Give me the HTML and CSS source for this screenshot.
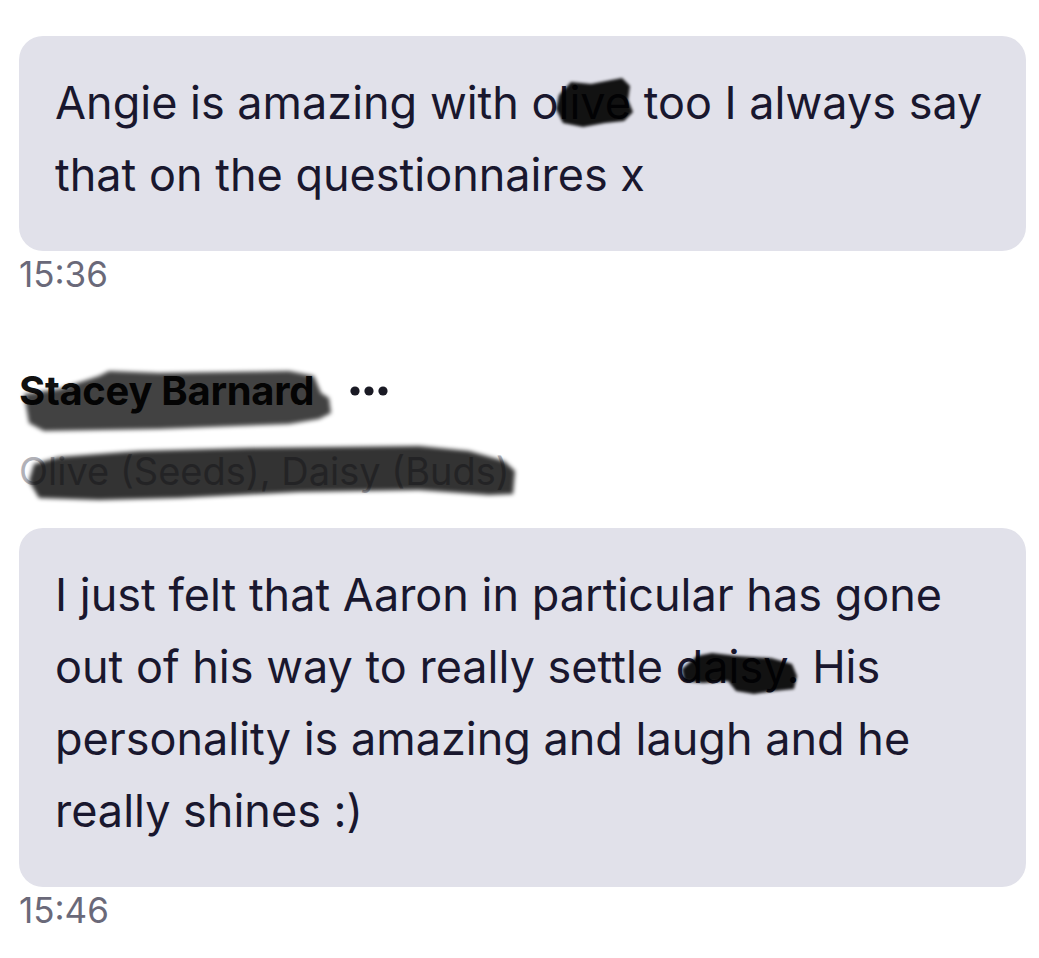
FILE: index.html
```html
<!DOCTYPE html>
<html lang="en">
<head>
<meta charset="utf-8">
<title>Messages</title>
<link rel="stylesheet" href="styles.css">
</head>
<body>
<main class="thread">
  <section class="msg">
    <div class="bubble">
      <p class="text">Angie is amazing with <span class="redact">olive<svg class="scribble" width="110" height="56" viewBox="0 0 110 56" aria-hidden="true"><defs><filter id="blur1" x="-20%" y="-20%" width="140%" height="140%"><feGaussianBlur stdDeviation="1.6"/></filter></defs><path filter="url(#blur1)" d="M27 20 L39 7 L59 9 L90 3 L98 11 L96 25 L101 37 L92 46 L73 48 L51 52 L31 48 L24 34 Z" fill="#000" fill-opacity="0.92"/></svg></span> too I always say that on the questionnaires x</p>
    </div>
    <div class="time">15:36</div>
  </section>

  <section class="sender">
    <div class="name-row">
      <span class="name redact">Stacey Barnard<svg class="scribble" width="320" height="66" viewBox="0 0 320 66" aria-hidden="true"><defs><filter id="blur2" x="-10%" y="-30%" width="120%" height="160%"><feGaussianBlur stdDeviation="2"/></filter></defs><path filter="url(#blur2)" d="M5 27 L40 22 L80 9 L90 4 L140 6 L270 4 L295 9 L302 26 L310 31 L312 46 L300 52 L270 57 L140 62 L25 64 L10 56 Z" fill="#000" fill-opacity="0.74"/></svg></span>
      <svg class="more" width="38" height="10" viewBox="0 0 38 10" aria-label="More"><circle cx="5" cy="5" r="4.6"/><circle cx="19" cy="5" r="4.6"/><circle cx="33" cy="5" r="4.6"/></svg>
    </div>
    <div class="groups"><span class="redact">Olive (Seeds), Daisy (Buds)<svg class="scribble" width="500" height="56" viewBox="0 0 500 56" aria-hidden="true"><defs><filter id="blur3" x="-10%" y="-30%" width="120%" height="160%"><feGaussianBlur stdDeviation="2"/></filter></defs><path filter="url(#blur3)" d="M15 16 L40 9 L120 3 L230 0 L400 -2 L450 3 L485 13 L496 23 L494 46 L470 47 L400 42 L280 44 L160 50 L80 52 L20 50 L10 33 Z" fill="#000" fill-opacity="0.8"/></svg></span></div>
  </section>

  <section class="msg">
    <div class="bubble">
      <p class="text">I just felt that Aaron in particular has gone out of his way to really settle <span class="redact">daisy.<svg class="scribble" width="125" height="60" viewBox="0 0 125 60" aria-hidden="true"><defs><filter id="blur4" x="-20%" y="-20%" width="140%" height="140%"><feGaussianBlur stdDeviation="1.6"/></filter></defs><path filter="url(#blur4)" d="M6 30 L21 17 L36 14 L61 17 L95 19 L116 25 L121 37 L118 50 L99 52 L78 55 L60 52 L52 42 L27 44 L8 42 Z" fill="#000" fill-opacity="0.92"/></svg></span> His personality is amazing and laugh and he really shines :)</p>
    </div>
    <div class="time">15:46</div>
  </section>
</main>
</body>
</html>
```

FILE: styles.css
```css
* {
  box-sizing: border-box;
}

html, body {
  margin: 0;
  padding: 0;
  background: #ffffff;
}

body {
  font-family: Inter, "Noto Sans", "Liberation Sans", sans-serif;
  color: #19172e;
}

.thread {
  display: flex;
  flex-direction: column;
  padding: 36px 13px 0 19px;
}

.bubble {
  background: #e1e1ea;
  border-radius: 24px;
  padding: 31px 30px 40px 36px;
}

.text {
  margin: 0;
  font-size: 45px;
  line-height: 72px;
  color: #19172e;
}

.time {
  margin-top: 2px;
  font-size: 35px;
  line-height: 42px;
  color: #6a6979;
}

.sender {
  margin-top: 72px;
  display: flex;
  flex-direction: column;
}

.name-row {
  display: flex;
  align-items: center;
  gap: 36px;
}

.name {
  font-size: 40px;
  line-height: 48px;
  font-weight: 700;
  color: #111111;
  letter-spacing: -0.3px;
}

.more {
  fill: #1a1a24;
  flex: none;
}

.groups {
  margin-top: 33px;
  font-size: 38px;
  line-height: 46px;
  color: #b1b1b7;
}

.sender + .msg {
  margin-top: 34px;
}

.redact {
  position: relative;
}

.scribble {
  position: absolute;
  left: 0;
  top: 0;
  overflow: visible;
  pointer-events: none;
}
```
